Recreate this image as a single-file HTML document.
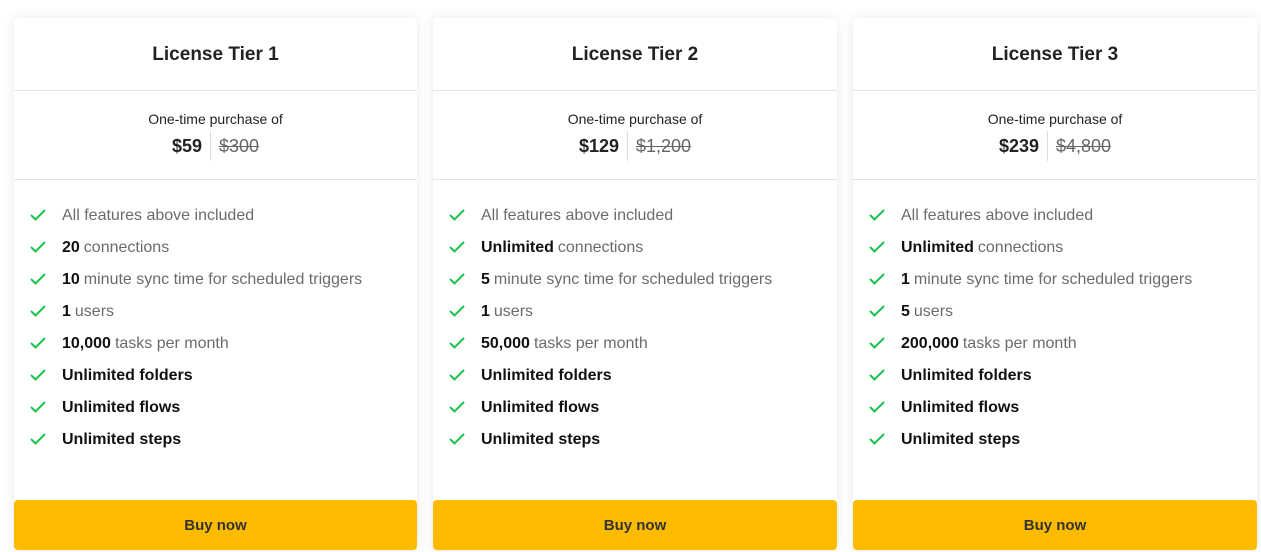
<!DOCTYPE html><html><head><style>
body{margin:0;background:#fff;font-family:"Liberation Sans",sans-serif;width:1261px;height:550px;overflow:hidden;position:relative}
.card{position:absolute;top:18px;width:403px;height:532px;background:#fff;border-radius:4px;box-shadow:0 0 12px rgba(0,0,0,.09)}
.h{height:72px;border-bottom:1px solid #e3e3e3;text-align:center;line-height:74px;font-size:19px;font-weight:bold;color:#222}
.p{height:88px;border-bottom:1px solid #e3e3e3;text-align:center;color:#222}
.p .o{font-size:14px;padding-top:19px;line-height:18px}
.p .r{margin-top:3px;display:flex;justify-content:center;align-items:center;height:30px}
.p b{font-size:18px;padding-right:8px;border-right:1px solid #ddd;line-height:30px}
.p s{font-size:18px;color:#666;padding-left:8px}
ul{list-style:none;margin:0;padding:20px 0 0 16px}
li{height:32px;line-height:26px;font-size:16px;color:#6b6b6b;display:flex;align-items:center}
li b{color:#111;margin-right:4px}
li svg{margin-right:16px;flex:none;margin-top:-3px}
.btn{position:absolute;left:0;right:0;bottom:0;height:50px;background:#fdbb00;border-radius:4px;text-align:center;line-height:52px;font-weight:bold;font-size:15px;color:#333}
</style></head><body>
<div class="card" style="left:14px"><div class="h">License Tier 1</div><div class="p"><div class="o">One-time purchase of</div><div class="r"><b>$59</b><s>$300</s></div></div><ul>
<li><svg width="16" height="16" viewBox="0 0 16 16"><path d="M1 8l4.5 4.5L15 3" fill="none" stroke="#1cc24e" stroke-width="2"/></svg>All features above included</li>
<li><svg width="16" height="16" viewBox="0 0 16 16"><path d="M1 8l4.5 4.5L15 3" fill="none" stroke="#1cc24e" stroke-width="2"/></svg><b>20</b>connections</li>
<li><svg width="16" height="16" viewBox="0 0 16 16"><path d="M1 8l4.5 4.5L15 3" fill="none" stroke="#1cc24e" stroke-width="2"/></svg><b>10</b>minute sync time for scheduled triggers</li>
<li><svg width="16" height="16" viewBox="0 0 16 16"><path d="M1 8l4.5 4.5L15 3" fill="none" stroke="#1cc24e" stroke-width="2"/></svg><b>1</b>users</li>
<li><svg width="16" height="16" viewBox="0 0 16 16"><path d="M1 8l4.5 4.5L15 3" fill="none" stroke="#1cc24e" stroke-width="2"/></svg><b>10,000</b>tasks per month</li>
<li><svg width="16" height="16" viewBox="0 0 16 16"><path d="M1 8l4.5 4.5L15 3" fill="none" stroke="#1cc24e" stroke-width="2"/></svg><b>Unlimited folders</b></li>
<li><svg width="16" height="16" viewBox="0 0 16 16"><path d="M1 8l4.5 4.5L15 3" fill="none" stroke="#1cc24e" stroke-width="2"/></svg><b>Unlimited flows</b></li>
<li><svg width="16" height="16" viewBox="0 0 16 16"><path d="M1 8l4.5 4.5L15 3" fill="none" stroke="#1cc24e" stroke-width="2"/></svg><b>Unlimited steps</b></li>
</ul><div class="btn">Buy now</div></div>
<div class="card" style="left:433px;width:404px"><div class="h">License Tier 2</div><div class="p"><div class="o">One-time purchase of</div><div class="r"><b>$129</b><s>$1,200</s></div></div><ul>
<li><svg width="16" height="16" viewBox="0 0 16 16"><path d="M1 8l4.5 4.5L15 3" fill="none" stroke="#1cc24e" stroke-width="2"/></svg>All features above included</li>
<li><svg width="16" height="16" viewBox="0 0 16 16"><path d="M1 8l4.5 4.5L15 3" fill="none" stroke="#1cc24e" stroke-width="2"/></svg><b>Unlimited</b>connections</li>
<li><svg width="16" height="16" viewBox="0 0 16 16"><path d="M1 8l4.5 4.5L15 3" fill="none" stroke="#1cc24e" stroke-width="2"/></svg><b>5</b>minute sync time for scheduled triggers</li>
<li><svg width="16" height="16" viewBox="0 0 16 16"><path d="M1 8l4.5 4.5L15 3" fill="none" stroke="#1cc24e" stroke-width="2"/></svg><b>1</b>users</li>
<li><svg width="16" height="16" viewBox="0 0 16 16"><path d="M1 8l4.5 4.5L15 3" fill="none" stroke="#1cc24e" stroke-width="2"/></svg><b>50,000</b>tasks per month</li>
<li><svg width="16" height="16" viewBox="0 0 16 16"><path d="M1 8l4.5 4.5L15 3" fill="none" stroke="#1cc24e" stroke-width="2"/></svg><b>Unlimited folders</b></li>
<li><svg width="16" height="16" viewBox="0 0 16 16"><path d="M1 8l4.5 4.5L15 3" fill="none" stroke="#1cc24e" stroke-width="2"/></svg><b>Unlimited flows</b></li>
<li><svg width="16" height="16" viewBox="0 0 16 16"><path d="M1 8l4.5 4.5L15 3" fill="none" stroke="#1cc24e" stroke-width="2"/></svg><b>Unlimited steps</b></li>
</ul><div class="btn">Buy now</div></div>
<div class="card" style="left:853px;width:404px"><div class="h">License Tier 3</div><div class="p"><div class="o">One-time purchase of</div><div class="r"><b>$239</b><s>$4,800</s></div></div><ul>
<li><svg width="16" height="16" viewBox="0 0 16 16"><path d="M1 8l4.5 4.5L15 3" fill="none" stroke="#1cc24e" stroke-width="2"/></svg>All features above included</li>
<li><svg width="16" height="16" viewBox="0 0 16 16"><path d="M1 8l4.5 4.5L15 3" fill="none" stroke="#1cc24e" stroke-width="2"/></svg><b>Unlimited</b>connections</li>
<li><svg width="16" height="16" viewBox="0 0 16 16"><path d="M1 8l4.5 4.5L15 3" fill="none" stroke="#1cc24e" stroke-width="2"/></svg><b>1</b>minute sync time for scheduled triggers</li>
<li><svg width="16" height="16" viewBox="0 0 16 16"><path d="M1 8l4.5 4.5L15 3" fill="none" stroke="#1cc24e" stroke-width="2"/></svg><b>5</b>users</li>
<li><svg width="16" height="16" viewBox="0 0 16 16"><path d="M1 8l4.5 4.5L15 3" fill="none" stroke="#1cc24e" stroke-width="2"/></svg><b>200,000</b>tasks per month</li>
<li><svg width="16" height="16" viewBox="0 0 16 16"><path d="M1 8l4.5 4.5L15 3" fill="none" stroke="#1cc24e" stroke-width="2"/></svg><b>Unlimited folders</b></li>
<li><svg width="16" height="16" viewBox="0 0 16 16"><path d="M1 8l4.5 4.5L15 3" fill="none" stroke="#1cc24e" stroke-width="2"/></svg><b>Unlimited flows</b></li>
<li><svg width="16" height="16" viewBox="0 0 16 16"><path d="M1 8l4.5 4.5L15 3" fill="none" stroke="#1cc24e" stroke-width="2"/></svg><b>Unlimited steps</b></li>
</ul><div class="btn">Buy now</div></div>
</body></html>
